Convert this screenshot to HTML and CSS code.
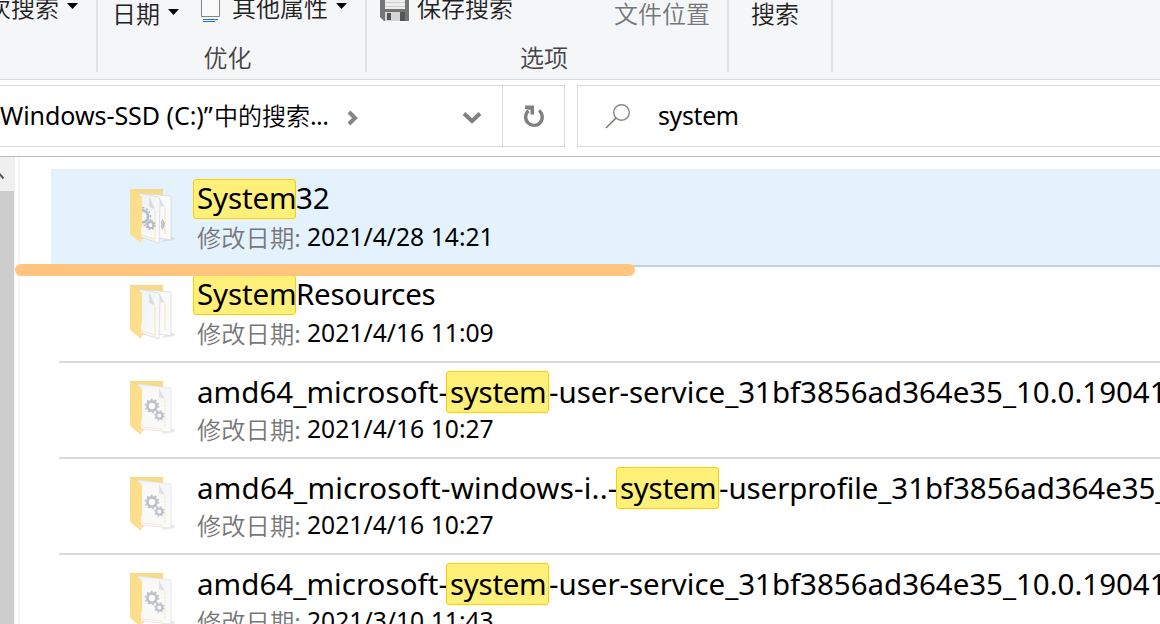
FILE: index.html
```html
<!DOCTYPE html>
<html lang="zh-CN">
<head>
<meta charset="utf-8">
<title>搜索</title>
<link rel="stylesheet" href="styles.css">
</head>
<body>
<svg class="defs" width="0" height="0">
  <defs>
    <linearGradient id="flap" x1="0" y1="0" x2="1" y2="1"><stop offset="0" stop-color="#f9dc8c"/><stop offset="1" stop-color="#ffe08a"/></linearGradient>
    <linearGradient id="paper" x1="0" y1="0" x2="1" y2="1"><stop offset="0" stop-color="#f0f1f3"/><stop offset="1" stop-color="#fcfcfd"/></linearGradient>
    <g id="gears" fill="none" stroke="#b9c2cb">
      <circle cx="22" cy="26" r="4.600" stroke-width="2.600"/>
      <circle cx="22" cy="26" r="6.500" stroke-width="1.600" stroke-dasharray="1.900 2.180"/>
      <circle cx="29.300" cy="35.500" r="3" stroke-width="2"/>
      <circle cx="29.300" cy="35.500" r="4.500" stroke-width="1.400" stroke-dasharray="1.700 1.830"/>
    </g>
    <g id="folder-back">
      <path d="M31 54l13-2 1-2-5-2z" fill="#aaa" opacity=".28"/>
      <path d="M0 1h33v10L12 53z" fill="#f7da87"/>
    </g>
    <path id="folder-front" d="M0 1l10 6q2 1 2 4v28l-1 1v15L0 46z" fill="url(#flap)"/>
    <g id="folder-one">
      <use href="#folder-back"/>
      <path d="M8 4l33 4v44l-30-3z" fill="url(#paper)" stroke="#e0e2e5" stroke-width=".8"/>
      <path d="M12 7l17 1 6 10v29l-22-1z" fill="#f9f9f7"/>
      <path d="M29 8l6 11-6-2z" fill="#dfe1e1"/>
      <path d="M35 20v28M13 47l20 2" stroke="#f5e6bc" stroke-dasharray="3 1" fill="none"/>
      <use href="#gears"/>
      <use href="#folder-front"/>
    </g>
    <g id="folder-two">
      <use href="#folder-back"/>
      <path d="M18 6l23 2v44l-18-3z" fill="#fafafb" stroke="#d5d9dd" stroke-width=".8"/>
      <path d="M29 9l6 10-6-2z" fill="#dfe1e1"/>
      <path d="M35 20v26" stroke="#f5e6bc"/>
      <path d="M9 5l19 4q2 1 2 4l-1 42-18-6z" fill="url(#paper)" stroke="#d5d9dd" stroke-width=".8"/>
      <path d="M19 8l6 13-6-2z" fill="#dadcdd"/>
      <path d="M25 22v31M12 47l12 4" stroke="#f5e6bc" fill="none"/>
    </g>
  </defs>
</svg>

<header class="ribbon">
  <section class="group group-recent">
    <div class="tools"><span class="tool raised">次搜索<i class="caret"></i></span></div>
    <div class="caption"></div>
  </section>
  <section class="group group-refine">
    <div class="tools">
      <span class="tool">日期<i class="caret"></i></span>
      <span class="tool raised props">
        <svg width="19" height="24" viewBox="0 0 19 24"><path d="M.5 0v16.500h18V0" fill="#fafafa" stroke="#858585"/><path d="M2 19.500h15M2 21.500h12" stroke="#2b76c4"/></svg>
        其他属性<i class="caret"></i></span>
    </div>
    <div class="caption">优化</div>
  </section>
  <section class="group group-options">
    <div class="tools">
      <span class="tool raised save">
        <svg width="29" height="24" viewBox="0 0 29 24"><path d="M0 0h29v21H4l-4-4z" fill="#747474"/><path d="M5 0h20v9H5z" fill="#ececec"/><path d="M5 2.500h20M5 6.500h20" stroke="#cfcfcf"/><path d="M5 12h15v9H5z" fill="#d5d5d5"/><path d="M7 13h4v7H7z" fill="#555"/><path d="M20 12h5v9h-5z" fill="#555"/></svg>
        保存搜索</span>
      <span class="tool disabled">文件位置</span>
    </div>
    <div class="caption">选项</div>
  </section>
  <section class="group group-close">
    <div class="tools"><span class="tool">搜索</span></div>
    <div class="caption"></div>
  </section>
</header>

<nav class="navbar">
  <div class="address">
    <div class="crumb"><span class="drive">Windows-SSD (C:)”</span><span>中的搜索</span><span class="dots">...</span></div>
    <svg class="next" width="12" height="16" viewBox="0 0 12 16"><path d="M2 2l6 6-6 6" fill="none" stroke="#858585" stroke-width="4"/></svg>
    <svg class="down" width="20" height="14" viewBox="0 0 20 14"><path d="M2 2.500l8 7.500 8-7.500" fill="none" stroke="#808080" stroke-width="4"/></svg>
    <div class="refresh"><svg width="22" height="24" viewBox="0 0 22 24"><path d="M16 6.500A8.300 8.300 0 1 1 5.500 6.800" fill="none" stroke="#808080" stroke-width="3.400"/><path d="M2 1.500h9v9H7.500V6L2 5z" fill="#808080"/></svg></div>
  </div>
  <div class="search">
    <svg width="26" height="27" viewBox="0 0 26 27"><circle cx="16.500" cy="9.500" r="7.800" fill="none" stroke="#808894" stroke-width="1.400"/><path d="M11 15L1 25" stroke="#806f66" stroke-width="1.500"/></svg>
    <span>system</span>
  </div>
</nav>

<main class="content">
  <aside class="scrollbar">
    <div class="scroll-up"><svg width="14" height="12" viewBox="0 0 14 12"><path d="M-5 8.500l4-5 4.500 5" fill="none" stroke="#555" stroke-width="2"/></svg></div>
    <div class="thumb"></div>
  </aside>
  <div class="pane">
    <article class="row selected">
      <svg class="icon" width="47" height="60" viewBox="0 0 47 60"><use href="#folder-two"/><g fill="none" stroke="#b5bec6"><path d="M12 22q6 1 6 6.500t-6 6" stroke-width="2.600"/><path d="M12 19.500q8 1 8.500 9t-7.500 9" stroke-width="1.600" stroke-dasharray="2 2"/><circle cx="20.500" cy="37" r="3" stroke-width="2.200"/><circle cx="20.500" cy="37" r="4.600" stroke-width="1.400" stroke-dasharray="1.800 1.810"/><path d="M31 33.500q2.500 3 0 5.500M32 31.500q4 4.500 0 9.500" stroke-width="1.500"/></g><use href="#folder-front"/></svg>
      <div class="info"><div class="name"><mark>System</mark><span class="num">32</span></div><div class="meta"><span class="label">修改日期:</span><time>2021/4/28 14:21</time></div></div>
    </article>
    <article class="row">
      <svg class="icon" width="47" height="60" viewBox="0 0 47 60"><use href="#folder-two"/><use href="#folder-front"/></svg>
      <div class="info"><div class="name"><mark>System</mark><span class="res">Resources</span></div><div class="meta"><span class="label">修改日期:</span><time>2021/4/16 11:09</time></div></div>
    </article>
    <article class="row">
      <svg class="icon" width="47" height="60" viewBox="0 0 47 60"><use href="#folder-one"/></svg>
      <div class="info"><div class="name long"><span class="pre">amd64_microsoft-</span><mark>system</mark><span class="svc">-user-service_31bf3856ad364e35_10.0.19041</span></div><div class="meta"><span class="label">修改日期:</span><time>2021/4/16 10:27</time></div></div>
    </article>
    <article class="row">
      <svg class="icon" width="47" height="60" viewBox="0 0 47 60"><use href="#folder-one"/></svg>
      <div class="info"><div class="name long"><span class="pre-long">amd64_microsoft-windows-i..-</span><mark>system</mark><span class="profile">-userprofile_31bf3856ad364e35_</span></div><div class="meta"><span class="label">修改日期:</span><time>2021/4/16 10:27</time></div></div>
    </article>
    <article class="row">
      <svg class="icon" width="47" height="60" viewBox="0 0 47 60"><use href="#folder-one"/></svg>
      <div class="info"><div class="name long"><span class="pre">amd64_microsoft-</span><mark>system</mark><span class="svc">-user-service_31bf3856ad364e35_10.0.19041</span></div><div class="meta"><span class="label">修改日期:</span><time>2021/3/10 11:43</time></div></div>
    </article>
  </div>
  <div class="underline"></div>
</main>
</body>
</html>
```
FILE: styles.css
```css
* { box-sizing: border-box; }
body {
  margin: 0;
  width: 1160px;
  height: 624px;
  overflow: hidden;
  background: #fff;
  color: #000;
  font-family: "Noto Sans", "Noto Sans CJK SC", sans-serif;
  white-space: nowrap;
}
svg { display: block; flex: none; overflow: visible; }
.defs { position: absolute; }

.ribbon {
  display: flex;
  height: 80px;
  background: #f5f6f8;
  border-bottom: 1px solid #d9dadc;
  overflow: hidden;
  font-family: "Noto Sans CJK SC", sans-serif;
  font-weight: 350;
  font-size: 24px;
  color: #222;
}
.group { flex: none; height: 72px; border-right: 2px solid #e1e2e5; }
.group-recent { width: 98px; }
.group-refine { width: 269px; }
.group-options { width: 362px; }
.group-close { width: 104px; }
.tools { display: flex; height: 43px; }
.tool { display: flex; flex: none; height: 28px; line-height: 26px; }
.raised { margin-top: -6px; }
.group-recent .tool { margin-left: -13px; }
.group-refine .tools { padding-left: 14px; }
.group-options .tools { padding-left: 13px; }
.group-close .tools { padding-left: 22px; }
.caret {
  width: 11px;
  height: 6px;
  margin: 9px 0 0 8px;
  background: #000;
  clip-path: polygon(0 0, 100% 0, 50% 100%);
}
.props { margin-left: 22px; }
.props svg { margin: 6px 12px 0 0; }
.save svg { margin: 6px 8px 0 0; }
.save { width: 234px; }
.disabled { color: #777; }
.caption { height: 29px; line-height: 27px; text-align: center; color: #444; }
.group-refine .caption { padding-right: 8px; }
.group-options .caption { padding-right: 6px; }

.navbar {
  display: flex;
  gap: 12px;
  height: 77px;
  padding-top: 5px;
  border-bottom: 1px solid #bdbdbd;
  font-size: 24.8px;
}
.address {
  display: flex;
  align-items: center;
  width: 565px;
  height: 62px;
  border: 1px solid #d9d9d9;
  border-left: 0;
}
.crumb { display: flex; width: 347px; height: 60px; line-height: 58px; }
.crumb span { font-family: "Noto Sans CJK SC", sans-serif; font-weight: 350; font-size: 24px; }
.crumb .drive, .crumb .dots { font-family: "Noto Sans", sans-serif; font-weight: 400; font-size: 25px; }
.crumb .drive { width: 214px; letter-spacing: -.05px; }
.crumb .dots { letter-spacing: -.6px; }
.next { margin-top: 3px; }
.down { margin: 3px 0 0 103px; }
.refresh {
  display: flex;
  align-items: center;
  justify-content: center;
  width: 62px;
  height: 60px;
  margin-left: auto;
  border-left: 1px solid #d9d9d9;
}
.search {
  display: flex;
  align-items: center;
  flex: 1;
  height: 62px;
  padding-left: 27px;
  gap: 27px;
  border: 1px solid #d9d9d9;
  border-right: 0;
}
.search span { height: 60px; line-height: 58px; letter-spacing: -.3px; }

.content { position: relative; display: flex; height: 467px; }
.scrollbar { width: 15px; background: #f0f0f0; }
.scroll-up { height: 34px; padding-top: 13px; overflow: hidden; }
.thumb { height: 433px; margin-right: 1px; background: #cdcdcd; }
.pane {
  width: 1142px;
  margin-left: 3px;
  padding: 12px 0 0 33px;
  border-left: 2px solid #f5f5f5;
  overflow: hidden;
}
.row {
  display: flex;
  height: 96px;
  margin-left: 6px;
  border-bottom: 2px solid #dadada;
}
.selected {
  height: 98px;
  margin-left: -2px;
  padding: 2px 0 0 8px;
  background: #e4f2fe;
  border-color: #c2d2df;
}
.icon { margin: 17px 20px 0 71px; }
.info { flex: none; padding-top: 8px; }
.name { display: flex; height: 40px; line-height: 38px; font-size: 29.5px; }
.name > * { flex: none; }
mark {
  width: 103px;
  height: 40px;
  line-height: 36px;
  margin-left: -4px;
  padding-left: 3px;
  color: #000;
  background: #fff07a;
  border: 1px solid #fc0;
  border-radius: 3px;
  letter-spacing: -.15px;
}
.long { line-height: 42px; }
.long mark { height: 42px; line-height: 40px; letter-spacing: -.3px; }
.res { letter-spacing: -.25px; }
.svc { letter-spacing: -.03px; }
.pre { width: 253px; letter-spacing: .05px; }
.pre-long { width: 423px; letter-spacing: .22px; }
.profile { letter-spacing: -.08px; }
.meta { display: flex; height: 36px; line-height: 36px; font-size: 24.7px; }
.label { width: 110px; color: #777; font-family: "Noto Sans CJK SC", sans-serif; font-weight: 350; font-size: 24.300px; }
.underline {
  position: absolute;
  left: 15px;
  top: 107px;
  width: 620px;
  height: 12px;
  border-radius: 6px;
  background: #ffc47d;
}
```
